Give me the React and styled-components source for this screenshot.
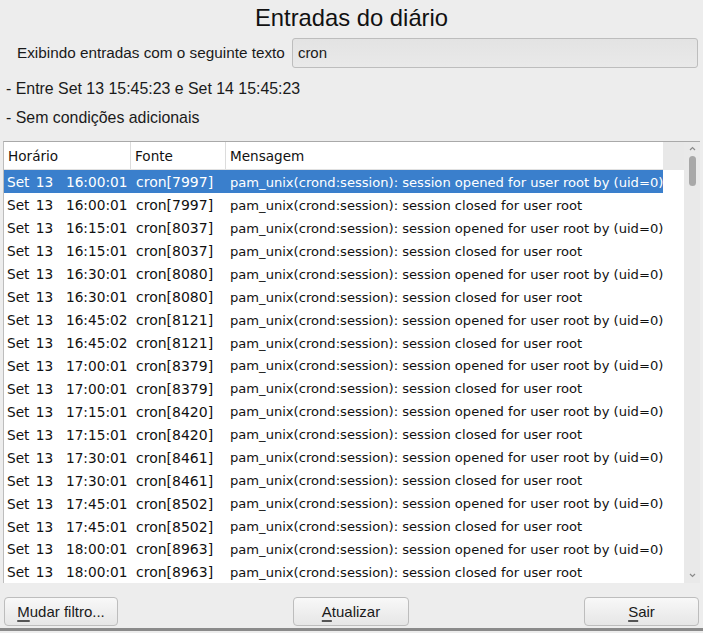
import React from 'react'
import styled, { createGlobalStyle } from 'styled-components'

const GlobalStyle = createGlobalStyle`
  html, body { margin: 0; padding: 0; background: #ededed; }
  body { font-family: "Liberation Sans", Arial, sans-serif; }
`

const Window = styled.div`
  width: 703px;
  height: 633px;
  background: #ededed;
  display: flex;
  flex-direction: column;
  overflow: hidden;
  color: #1a1a1a;
`

const Title = styled.h1`
  margin: 0;
  height: 37px;
  line-height: 36px;
  text-align: center;
  font-size: 23.8px;
  font-weight: normal;
  color: #111;
`

const FilterRow = styled.div`
  display: flex;
  align-items: center;
  gap: 7px;
  padding: 0 5px 0 17px;
  height: 31px;
`

const Label = styled.span`
  font-size: 15.3px;
  white-space: nowrap;
`

const TextBox = styled.div`
  flex: 1;
  height: 30px;
  box-sizing: border-box;
  border: 1px solid #bdbdbd;
  border-radius: 3px;
  background: linear-gradient(#e3e3e3, #e9e9e9);
  padding: 0 5px;
  display: flex;
  align-items: center;
  font-size: 15px;
`

const Condition = styled.div`
  font-size: 15.9px;
  padding-left: 6px;
  height: ${p => p.$h}px;
  line-height: ${p => p.$lh}px;
`

const TableFrame = styled.div`
  margin: 0 3px;
  height: 442px;
  border-top: 1px solid #a9a9a9;
  border-left: 1px solid #bdbdbd;
  background: #fff;
  display: flex;
  box-sizing: border-box;
`

const TableBody = styled.div`
  flex: 1;
  display: flex;
  flex-direction: column;
  overflow: hidden;
`

const HeaderRow = styled.div`
  display: flex;
  height: 28px;
  background: #e8e8e8;
  flex-shrink: 0;
`

const HeaderCells = styled.div`
  display: grid;
  grid-template-columns: 127px 95px 437px;
  background: #fff;
  border-bottom: 1px solid #e1e1e1;
  box-sizing: border-box;
`

const HeaderCell = styled.div`
  font-family: "DejaVu Sans", Verdana, sans-serif;
  font-size: 13.6px;
  padding: 1px 0 0 4px;
  display: flex;
  align-items: center;
  border-right: ${p => (p.$last ? 'none' : '1px solid #dcdcdc')};
  color: #111;
`

const Row = styled.div`
  display: grid;
  grid-template-columns: 127px 95px 437px;
  height: 23px;
  box-sizing: border-box;
  padding-top: 2px;
  align-items: center;
  background: ${p => (p.$selected ? '#3a7fcc' : '#fff')};
  color: ${p => (p.$selected ? '#fff' : '#111')};
  width: 659px;
  font-family: "DejaVu Sans", Verdana, sans-serif;
  white-space: pre;
`

const Cell = styled.div`
  padding-left: ${p => p.$pad || 4}px;
  font-size: ${p => p.$size || 13.1}px;
  word-spacing: ${p => p.$ws || 0}px;
  overflow: hidden;
`

const Scrollbar = styled.div`
  width: 16px;
  background: #e9e9e9;
  display: flex;
  flex-direction: column;
  align-items: center;
  padding-top: 4px;
  box-sizing: border-box;
`

const Arrow = styled.svg`
  width: 7px;
  height: 5px;
  flex-shrink: 0;
  margin-bottom: ${p => p.$mb || 0}px;
`

const Thumb = styled.div`
  width: 7px;
  height: 30px;
  margin-top: 5px;
  border-radius: 4px;
  background: #a8a8a8;
`

const Spacer = styled.div`
  flex: 1;
`

const ButtonBar = styled.div`
  display: flex;
  justify-content: space-between;
  padding: 0 4px;
  height: 45px;
  flex-shrink: 0;
`

const Button = styled.button`
  width: ${p => p.$w || 115}px;
  height: 29px;
  border: 1px solid #bdbdbd;
  border-radius: 4px;
  background: linear-gradient(#f8f8f8, #e6e6e6);
  font-family: "Liberation Sans", Arial, sans-serif;
  font-size: 15px;
  color: #1a1a1a;
  padding: 0;
  margin-top: 14px;
`

const Mnemonic = styled.span`
  text-decoration: underline;
  text-decoration-color: #555;
  text-decoration-thickness: 2px;
  text-underline-offset: 3px;
`

const BottomEdge = styled.div`
  height: 3px;
  background: #8a8a8a;
  flex-shrink: 0;
`

const times = [
  ['16:00:01', '7997'],
  ['16:15:01', '8037'],
  ['16:30:01', '8080'],
  ['16:45:02', '8121'],
  ['17:00:01', '8379'],
  ['17:15:01', '8420'],
  ['17:30:01', '8461'],
  ['17:45:01', '8502'],
  ['18:00:01', '8963'],
]

const entries = times.flatMap(([t, pid]) => [
  { t, pid, msg: 'pam_unix(crond:session): session opened for user root by (uid=0)' },
  { t, pid, msg: 'pam_unix(crond:session): session closed for user root' },
])

export default function App() {
  return (
    <>
      <GlobalStyle />
      <Window>
        <Title>Entradas do diário</Title>
        <FilterRow>
          <Label>Exibindo entradas com o seguinte texto</Label>
          <TextBox>cron</TextBox>
        </FilterRow>
        <Condition $h={37} $lh={41}>- Entre Set 13 15:45:23 e Set 14 15:45:23</Condition>
        <Condition $h={36} $lh={26}>- Sem condições adicionais</Condition>
        <TableFrame>
          <TableBody>
            <HeaderRow>
              <HeaderCells>
                <HeaderCell>Horário</HeaderCell>
                <HeaderCell>Fonte</HeaderCell>
                <HeaderCell $last>Mensagem</HeaderCell>
              </HeaderCells>
            </HeaderRow>
            {entries.map((e, i) => (
              <Row key={i} $selected={i === 0}>
                <Cell $size={13.7} $pad={3} $ws={2}>{`Set 13  ${e.t}`}</Cell>
                <Cell $size={14} $pad={5}>{`cron[${e.pid}]`}</Cell>
                <Cell>{e.msg}</Cell>
              </Row>
            ))}
          </TableBody>
          <Scrollbar>
            <Arrow viewBox="0 0 7 5">
              <path d="M1 4 L3.5 1.5 L6 4" fill="none" stroke="#8a8a8a" strokeWidth="1.2" />
            </Arrow>
            <Thumb />
            <Spacer />
            <Arrow viewBox="0 0 7 5" $mb={5}>
              <path d="M1 1 L3.5 3.5 L6 1" fill="none" stroke="#8a8a8a" strokeWidth="1.2" />
            </Arrow>
          </Scrollbar>
        </TableFrame>
        <ButtonBar>
          <Button $w={114}><Mnemonic>M</Mnemonic>udar filtro...</Button>
          <Button $w={116}><Mnemonic>A</Mnemonic>tualizar</Button>
          <Button $w={115}><Mnemonic>S</Mnemonic>air</Button>
        </ButtonBar>
        <BottomEdge />
      </Window>
    </>
  )
}
